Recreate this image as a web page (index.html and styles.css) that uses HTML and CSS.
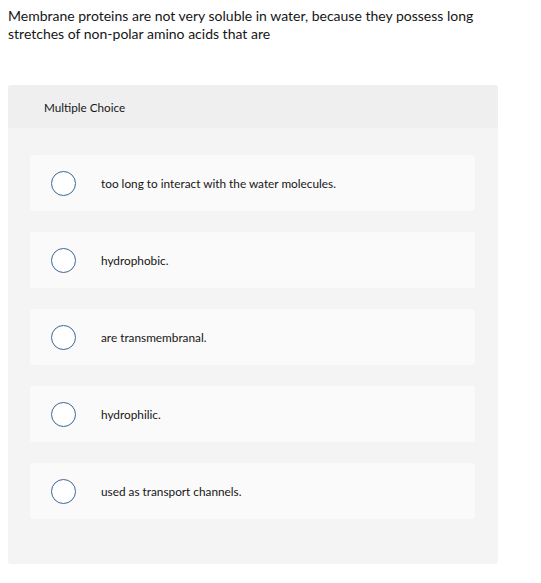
FILE: index.html
```html
<!DOCTYPE html>
<html>
<head>
<meta charset="utf-8">
<link rel="stylesheet" href="styles.css">
</head>
<body>
<p class="question">Membrane proteins are not very soluble in water, because they possess long stretches of non-polar amino acids that are</p>
<div class="panel">
  <div class="panel-header">Multiple Choice</div>
  <div class="options">
    <div class="option"><span class="radio"></span><span class="label">too long to interact with the water molecules.</span></div>
    <div class="option"><span class="radio"></span><span class="label">hydrophobic.</span></div>
    <div class="option"><span class="radio"></span><span class="label">are transmembranal.</span></div>
    <div class="option"><span class="radio"></span><span class="label">hydrophilic.</span></div>
    <div class="option"><span class="radio"></span><span class="label">used as transport channels.</span></div>
  </div>
</div>
</body>
</html>
```

FILE: styles.css
```css
body {
  margin: 0;
  padding: 7px 8px 0 8px;
  font-family: Lato, "Open Sans", Arial, sans-serif;
  color: #161616;
  background: #fff;
}
.question {
  margin: 0;
  width: 480px;
  font-size: 14px;
  line-height: 18px;
}
.panel {
  margin-top: 42px;
  width: 490px;
  background: #f4f4f4;
  border-radius: 3px;
  overflow: hidden;
}
.panel-header {
  background: #efefef;
  height: 43px;
  display: flex;
  align-items: center;
  padding-left: 36px;
  font-size: 11.7px;
}
.options {
  display: flex;
  flex-direction: column;
  gap: 21px;
  padding: 27px 23px 45px 22px;
}
.option {
  height: 56px;
  background: #fafafa;
  border-radius: 3px;
  display: flex;
  align-items: center;
}
.radio {
  width: 23px;
  height: 23px;
  border: 1.3px solid #3a6798;
  border-radius: 50%;
  background: #fff;
  margin-left: 21px;
  flex: none;
}
.label {
  margin-left: 25px;
  font-size: 11.8px;
}
```
